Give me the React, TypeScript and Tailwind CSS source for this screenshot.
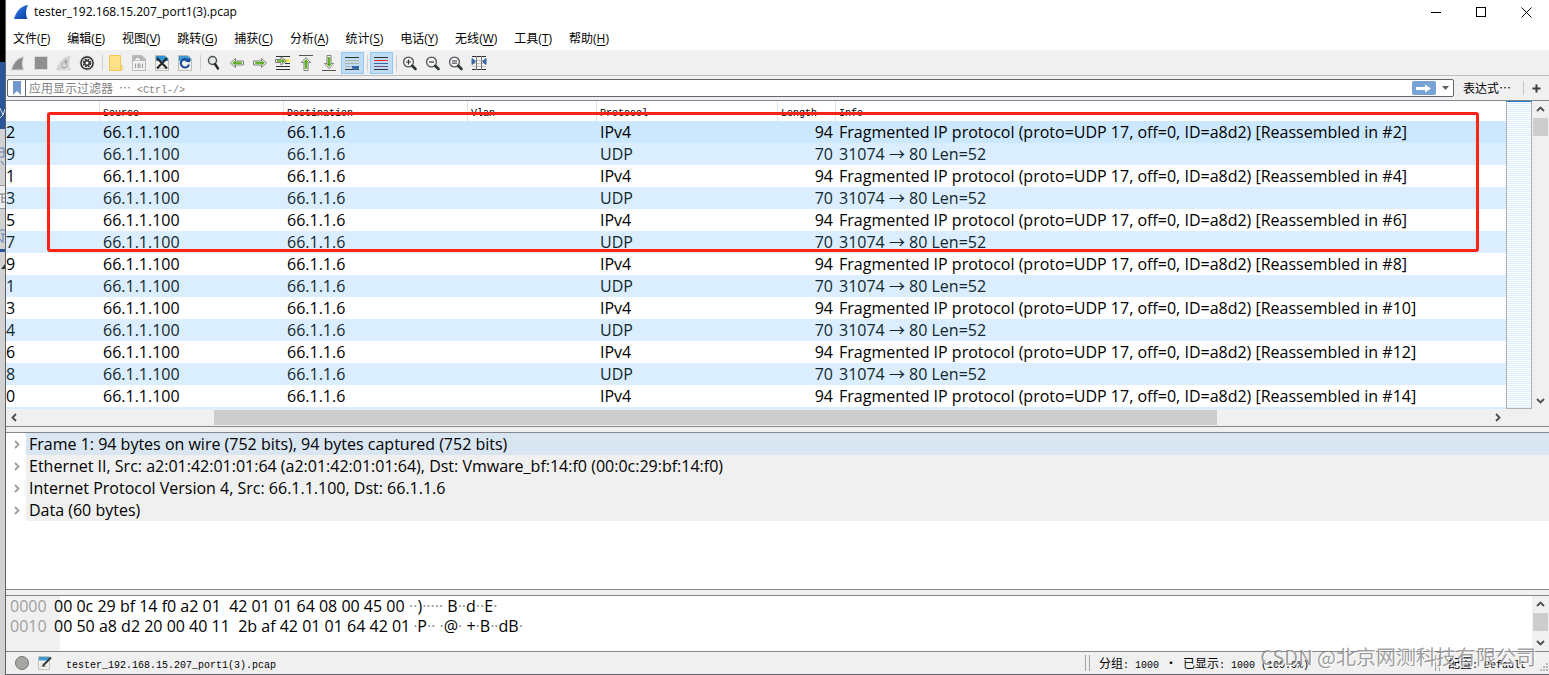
import { useState, type ReactNode } from 'react';

const MENUS = [
  ['文件', 'F'], ['编辑', 'E'], ['视图', 'V'], ['跳转', 'G'], ['捕获', 'C'], ['分析', 'A'],
  ['统计', 'S'], ['电话', 'Y'], ['无线', 'W'], ['工具', 'T'], ['帮助', 'H'],
];

const COLUMNS = ['', 'Source', 'Destination', 'Vlan', 'Protocol', 'Length', 'Info'];

// last visible digit of the No./Time column for every row
const TAILS = ['2', '9', '1', '3', '5', '7', '9', '1', '3', '4', '6', '8', '0'];

const PACKETS = TAILS.map((tail, i) => {
  const fragment = i % 2 === 0;
  return {
    tail,
    src: '66.1.1.100',
    dst: '66.1.1.6',
    vlan: '',
    proto: fragment ? 'IPv4' : 'UDP',
    length: fragment ? 94 : 70,
    info: fragment
      ? `Fragmented IP protocol (proto=UDP 17, off=0, ID=a8d2) [Reassembled in #${i + 2}]`
      : '31074 → 80 Len=52',
  };
});

const DETAILS = [
  'Frame 1: 94 bytes on wire (752 bits), 94 bytes captured (752 bits)',
  'Ethernet II, Src: a2:01:42:01:01:64 (a2:01:42:01:01:64), Dst: Vmware_bf:14:f0 (00:0c:29:bf:14:f0)',
  'Internet Protocol Version 4, Src: 66.1.1.100, Dst: 66.1.1.6',
  'Data (60 bytes)',
];

const HEX = [
  { offset: '0000', bytes: '00 0c 29 bf 14 f0 a2 01  42 01 01 64 08 00 45 00', ascii: '··)····· B··d··E·' },
  { offset: '0010', bytes: '00 50 a8 d2 20 00 40 11  2b af 42 01 01 64 42 01', ascii: ' ·P·· ·@· +·B··dB·' },
];

// Console style text: half-width latin next to full-width chinese
function Mono({ children }: { children: string }) {
  const parts = children.split(/([\u4e00-\u9fff…]+|·)/).filter(Boolean);
  return (
    <span className="inline-flex h-4 items-baseline whitespace-pre font-['Noto_Sans_CJK_SC',sans-serif] text-[12px] leading-4 before:content-['\200b']">
      {parts.map((p, i) =>
        p === '·' ? (
          <span key={i} className="w-3 text-center">{p}</span>
        ) : /[\u4e00-\u9fff…]/.test(p) ? (
          <span key={i}>{p}</span>
        ) : (
          <span key={i} className="font-['Liberation_Mono',monospace] text-[10px]">{p}</span>
        )
      )}
    </span>
  );
}

function Fin({ fill }: { fill: string }) {
  return <path d="M1 15 C3 8 7 2 15 1 C12.500 6 12.500 11 14.500 15 Z" fill={fill} />;
}

function Icon({ children }: { children: ReactNode }) {
  return <svg width="17" height="18" viewBox="0 -1 17 18" fill="none" aria-hidden="true">{children}</svg>;
}

function ToolButton({ label, active, children }: { label: string; active?: boolean; children: ReactNode }) {
  return (
    <button
      aria-label={label}
      title={label}
      className={`flex h-[22px] w-[23px] items-center justify-center border ${
        active ? 'border-[#90c8f6] bg-[#c0dcf3]' : 'border-transparent hover:bg-[#d8eaf9]'
      }`}
    >
      <Icon>{children}</Icon>
    </button>
  );
}

function Separator() {
  return (
    <div className="flex w-[6px] justify-center">
      <div className="h-4 w-px bg-[#cfcfcf]" />
    </div>
  );
}

function Arrow({ turn = 0 }: { turn?: number }) {
  return (
    <g transform={`rotate(${turn} 8 8)`}>
      <path d="M1.500 8 L6.500 3.500 V6 H14.500 V10 H6.500 V12.500 Z" fill="#fff" stroke="#7d7f7a" />
      <path d="M3.600 8 L6 6 V7.200 H12.500 V8.800 H6 V10 Z" fill="#4ea80c" stroke="#4ea80c" strokeWidth=".6" />
    </g>
  );
}

function Lens({ children }: { children?: ReactNode }) {
  return (
    <g transform="translate(0 1)">
      <circle cx="6.500" cy="6" r="4.900" fill="#f4f5f4" stroke="#50545a" strokeWidth="1.300" />
      <path d="M10.200 9.800 L13.500 13" stroke="#2e3436" strokeWidth="2.600" strokeLinecap="round" />
      {children}
    </g>
  );
}

function Page({ band = '#3c9ad0', sheet = '#f6f6ef' }: { band?: string; sheet?: string }) {
  return (
    <>
      <path d="M1.500 .500 H11 L14.500 4 V15.500 H1.500 Z" fill={sheet} stroke="#b9bbb6" />
      <path d="M2 1 H11 L14 4 V6 H2 Z" fill={band} />
    </>
  );
}

function Chevron({ dir, className = 'text-[#505050]' }: { dir: 'up' | 'down' | 'left' | 'right'; className?: string }) {
  const d = { up: 'M1 6 L4.500 2.500 L8 6', down: 'M1 3 L4.500 6.500 L8 3', left: 'M6 1 L2.500 4.500 L6 8', right: 'M3 1 L6.500 4.500 L3 8' }[dir];
  return (
    <svg width="9" height="9" viewBox="0 0 9 9" fill="none" className={className} aria-hidden="true">
      <path d={d} stroke="currentColor" strokeWidth="1.900" />
    </svg>
  );
}

function VScroll() {
  return (
    <div className="flex w-[17px] shrink-0 flex-col items-center bg-[#f0f0f0]">
      <button aria-label="Scroll up" className="flex h-[17px] w-full items-center justify-center"><Chevron dir="up" /></button>
      <div className="h-[18px] w-[15px] bg-[#cdcdcd]" />
      <div className="flex-1" />
      <button aria-label="Scroll down" className="flex h-[17px] w-full items-center justify-center"><Chevron dir="down" /></button>
    </div>
  );
}

// Sliver of the desktop that shows left of the window
function Desktop() {
  return (
    <div className="flex w-[5px] shrink-0 flex-col" aria-hidden="true">
      <div className="h-[62px] bg-black" />
      <div className="h-[67px] bg-[#2a5699]">
        <svg width="5" height="67" fill="none"><path d="M0 46 L3 53 L5 47 M3 53 L0 56" stroke="#d5deec" /></svg>
      </div>
      <div className="flex-1 bg-[#d2d2d2]">
        <svg width="5" height="150" fill="none">
          <path d="M0 19 H4 V28 H0 M0 23 H4 M1 32 L4 36" stroke="#5a7db5" />
          <rect y="57" width="5" height="22" fill="#ededed" />
          <path d="M0 56.500 H5 M0 79.500 H5" stroke="#9a9a9a" />
          <path d="M0 65 H5 M2 65 V74 M2 69 H5 M2 73 H5" stroke="#777" />
          <path d="M0 101 H5 M1 105 H5 M3 105 V114 M0 110 L2 113" stroke="#5a7db5" />
          <rect y="120" width="5" height="3" fill="#2a5699" />
          <path d="M1 140 L5 135 V140 Z" fill="#333" />
        </svg>
      </div>
    </div>
  );
}

export default function App() {
  const [filter, setFilter] = useState('');
  const [selected, setSelected] = useState(0);

  return (
    <div className="flex h-screen min-h-[640px] w-full overflow-hidden bg-[#f0f0f0] font-['Open_Sans','Noto_Sans_CJK_SC',sans-serif] text-black">
      <Desktop />
      <div className="relative flex min-w-0 flex-1 flex-col border-b border-l border-[#5f6166]">

        {/* title bar */}
        <header className="flex h-6 items-center justify-between bg-white">
          <div className="flex items-center gap-[5px] pl-[7px]">
            <svg width="16" height="16" viewBox="0 0 16 16" aria-hidden="true">
              <defs>
                <linearGradient id="fin" x1="0" y1="0" x2="1" y2="1">
                  <stop offset="0" stopColor="#5a9be8" />
                  <stop offset=".5" stopColor="#1c5fc8" />
                  <stop offset="1" stopColor="#0b3f9d" />
                </linearGradient>
              </defs>
              <Fin fill="url(#fin)" />
            </svg>
            <h1 className="text-[12px] leading-4">tester_192.168.15.207_port1(3).pcap</h1>
          </div>
          <div className="flex">
            <button aria-label="Minimize" className="flex h-6 w-[45px] items-center justify-center">
              <svg width="11" height="11"><path d="M0 5.500 H10" stroke="#000" /></svg>
            </button>
            <button aria-label="Maximize" className="flex h-6 w-[45px] items-center justify-center">
              <svg width="11" height="11" fill="none"><rect x=".5" y=".5" width="9" height="9" stroke="#000" /></svg>
            </button>
            <button aria-label="Close" className="flex h-6 w-[45px] items-center justify-center">
              <svg width="11" height="11"><path d="M.5 .5 L10.500 10.500 M10.500 .5 L.5 10.500" stroke="#000" /></svg>
            </button>
          </div>
        </header>

        {/* menus */}
        <nav className="flex h-[27px] items-end gap-[17px] border-b border-[#f0f0f0] bg-white pb-[3px] pl-[7px] text-[12px] leading-4">
          {MENUS.map(([name, key]) => (
            <button key={key} className="whitespace-nowrap">
              {name}(<span className="underline underline-offset-2">{key}</span>)
            </button>
          ))}
        </nav>

        {/* toolbar */}
        <div className="flex h-[25px] items-center border-b border-[#bdbdbd] pl-px">
          <ToolButton label="Start capture">
            <path d="M0 15.500 C2 8 6 2 15 .500 C12.500 6 13 11 15 15.500 Z" fill="#dcdcdc" />
            <path d="M2 14.500 C4 8 7 4 13 2.500 C11.500 7 11.500 11 13 14.500 Z" fill="#8b8b8b" />
          </ToolButton>
          <ToolButton label="Stop capture">
            <rect x="1" y="1" width="14" height="14" fill="#d8d8d8" />
            <rect x="2" y="2" width="12" height="12" fill="#8f8f8f" />
          </ToolButton>
          <ToolButton label="Restart capture">
            <path d="M.5 15 C2.500 8 6 2.500 14.500 1 C12.500 6 12.500 11 14.500 15 Z" fill="#cfcfcf" stroke="#dedede" />
            <path d="M7 7.500 C4.500 10 6 13 8.500 13 C11.500 13 12 9.500 10.200 8" stroke="#fff" strokeWidth="2.600" />
            <path d="M7 7.500 C4.500 10 6 13 8.500 13 C11.500 13 12 9.500 10.200 8" stroke="#9a9a9a" strokeWidth="1.300" />
            <path d="M9 4.500 L12 7 L8.500 8.500 Z" fill="#9a9a9a" />
          </ToolButton>
          <ToolButton label="Capture options">
            <circle cx="8" cy="8" r="7.500" fill="#c8c8c8" />
            <circle cx="8" cy="8" r="6" fill="#fff" stroke="#2c2c2c" strokeWidth="1.400" />
            <circle cx="8" cy="8" r="3.600" stroke="#333" strokeWidth="1.600" strokeDasharray="2 .830" />
            <circle cx="8" cy="8" r="3" fill="#333" />
            <circle cx="8" cy="8" r="1.500" fill="#fff" />
          </ToolButton>
          <Separator />
          <ToolButton label="Open">
            <path d="M1.500 .500 H12.500 V10.500 H14 V15.500 H1.500 Z" fill="#fde087" stroke="#ecc75e" />
            <path d="M12 11 H14 V15.500 H12 Z" fill="#f5cf62" />
          </ToolButton>
          <ToolButton label="Save">
            <Page band="#b5b5b5" sheet="#f1f1f1" />
            <path d="M5 5.500 C5 3 8 3.500 8 5.500" stroke="#fff" strokeWidth="1.500" />
            <path d="M4.500 8.500 V13 M7 9 h2 v3.500 h-2 z M11.500 8.500 V13" stroke="#9a9a9a" />
          </ToolButton>
          <ToolButton label="Close file">
            <Page band="#2d92cf" />
            <path d="M3 13.500 H13" stroke="#c9cbc4" />
            <path d="M3 3 L13 13.500 M13 3 L3 13.500" stroke="#22282d" strokeWidth="2.200" />
          </ToolButton>
          <ToolButton label="Reload file">
            <Page band="#3c9ad0" />
            <path d="M11.500 6 A4.200 4.200 0 1 0 12 9.500" stroke="#1e4f9c" strokeWidth="2.200" />
            <path d="M8 6.500 L13 7.500 L13 2.500 Z" fill="#1e4f9c" />
          </ToolButton>
          <Separator />
          <ToolButton label="Find packet">
            <circle cx="6.500" cy="5.500" r="4" fill="#e7eae8" stroke="#4f5457" strokeWidth="1.500" />
            <path d="M9 9 L12 13.500" stroke="#23282a" strokeWidth="2.400" strokeLinecap="round" />
          </ToolButton>
          <ToolButton label="Previous packet"><Arrow /></ToolButton>
          <ToolButton label="Next packet"><Arrow turn={180} /></ToolButton>
          <ToolButton label="Go to packet">
            <path d="M1 1.500 H15 M1 11.500 H15 M1 14.500 H15" stroke="#2e3436" />
            <path d="M10 8.500 H15" stroke="#2e3436" />
            <rect x="10" y="4" width="5" height="3" fill="#fce94f" />
            <path d="M.5 4.500 H6 V2 L11.500 6 L6 10 V7.500 H.5 Z" fill="#fff" stroke="#7d7f7a" />
            <path d="M2 6 H8.500 M7 4.500 L9 6 L7 7.500" stroke="#4ea80c" strokeWidth="1.300" />
          </ToolButton>
          <ToolButton label="First packet">
            <path d="M1 .500 H15" stroke="#555" />
            <g transform="translate(0 1)"><Arrow turn={90} /></g>
          </ToolButton>
          <ToolButton label="Last packet">
            <path d="M1 15.500 H15" stroke="#555" />
            <g transform="translate(0 -1)"><Arrow turn={-90} /></g>
          </ToolButton>
          <ToolButton label="Auto scroll" active>
            <path d="M1 2.500 H15 M1 14.500 H15" stroke="#2e3436" />
            <path d="M1 5.500 H15 M1 8.500 H15 M1 11.500 H8" stroke="#b0b3ad" />
            <path d="M8 11 H15 V13 L13 15 H10 L8 13 Z" fill="#3465a4" />
          </ToolButton>
          <Separator />
          <ToolButton label="Colorize" active>
            <path d="M1 2.500 H15 M1 14.500 H15" stroke="#2e3436" />
            <path d="M1 5.500 H15" stroke="#ef2929" />
            <path d="M1 8.500 H15" stroke="#3465a4" />
            <path d="M1 11.500 H15" stroke="#75507b" />
          </ToolButton>
          <Separator />
          <ToolButton label="Zoom in"><Lens><path d="M4 6 H9 M6.500 3.500 V8.500" stroke="#2e3436" strokeWidth="1.200" /></Lens></ToolButton>
          <ToolButton label="Zoom out"><Lens><path d="M4 6 H9" stroke="#2e3436" strokeWidth="1.200" /></Lens></ToolButton>
          <ToolButton label="Normal size"><Lens><path d="M4 5 H9 M4 7.200 H9" stroke="#2e3436" /></Lens></ToolButton>
          <ToolButton label="Resize columns">
            <path d="M1 1.500 H15 M1 14.500 H15" stroke="#2e3436" />
            <path d="M1 5.500 H15 M1 8.500 H15 M1 11.500 H15" stroke="#c4c6c2" />
            <path d="M5.500 1 V15 M10.500 1 V15" stroke="#777" />
            <path d="M1 3.500 L4.500 6.500 L1 9.500 Z M15 3.500 L11.500 6.500 L15 9.500 Z" fill="#3465a4" stroke="#3465a4" />
          </ToolButton>
        </div>

        {/* display filter */}
        <div className="flex h-6 items-center pl-px">
          <div className="flex h-[18px] flex-1 items-stretch rounded-[2px] border border-[#62656b] bg-white">
            <button aria-label="Bookmarks" className="flex w-[18px] items-center justify-center border-r border-[#62656b]">
              <svg width="8" height="14" viewBox="0 0 8 14"><path d="M0 0 H8 V14 L4 10 L0 14 Z" fill="#7298cc" /></svg>
            </button>
            <div className="relative flex-1">
              <input
                id="filter"
                value={filter}
                onChange={(e) => setFilter(e.target.value)}
                className="block h-full w-full bg-transparent px-[3px] text-[12px] outline-none"
              />
              {!filter && (
                <label htmlFor="filter" className="pointer-events-none absolute inset-y-0 left-[3px] flex items-center text-[#7f7f7f]">
                  <Mono>应用显示过滤器 … &lt;Ctrl-/&gt;</Mono>
                </label>
              )}
            </div>
            <button aria-label="Apply filter" className="my-px flex w-6 items-center justify-center rounded-[2px] bg-[#78a3d4]">
              <svg width="17" height="9" viewBox="0 0 17 9"><path d="M1 3 H10 V.500 L16 4.500 L10 8.500 V6 H1 Z" fill="#fff" /></svg>
            </button>
            <button aria-label="Recent filters" className="flex w-[17px] items-center justify-center pl-[3px]">
              <svg width="7" height="4"><path d="M0 0 H7 L3.500 4 Z" fill="#5f5f5f" /></svg>
            </button>
          </div>
          <button className="ml-[9px] flex"><Mono>表达式…</Mono></button>
          <div className="ml-3 h-[14px] w-px bg-[#c8c8c8]" />
          <button aria-label="Add filter button" className="flex w-[25px] items-center justify-center">
            <svg width="9" height="9"><path d="M4.500 .500 V8.500 M.5 4.500 H8.500" stroke="#3c3c3c" strokeWidth="2" /></svg>
          </button>
        </div>

        {/* packet list */}
        <section className="relative border-y border-[#828790] bg-white">
          <div className="flex h-[308px]">
            <div className="flex min-w-0 flex-1 flex-col overflow-hidden">
              <table className="w-full table-fixed border-collapse text-left">
                <colgroup>
                  <col className="w-[93px]" />
                  <col className="w-[184px]" />
                  <col className="w-[184px]" />
                  <col className="w-[129px]" />
                  <col className="w-[181px]" />
                  <col className="w-[58px]" />
                  <col />
                </colgroup>
                <thead>
                  <tr className="h-5">
                    {COLUMNS.map((c, i) => (
                      <th key={i} className={`p-0 font-normal ${i > 0 ? 'pl-1 shadow-[inset_1px_0_0_#e2e2e2]' : ''}`}>
                        <div className="flex h-5 items-center"><Mono>{c}</Mono></div>
                      </th>
                    ))}
                  </tr>
                </thead>
                <tbody className="text-[16px] leading-[22px] whitespace-nowrap">
                  {PACKETS.map((p, i) => (
                    <tr
                      key={i}
                      onClick={() => setSelected(i)}
                      className={`h-[22px] ${i === selected ? 'bg-[#cce8ff]' : i % 2 ? 'bg-[#daeeff] text-[#12272e]' : 'bg-white'}`}
                    >
                      <td className="p-0">{p.tail}</td>
                      <td className="p-0 pl-1">{p.src}</td>
                      <td className="p-0 pl-1">{p.dst}</td>
                      <td className="p-0 pl-1">{p.vlan}</td>
                      <td className="p-0 pl-1">{p.proto}</td>
                      <td className="p-0 pr-[2px] text-right">{p.length}</td>
                      <td className="p-0 pl-1">{p.info}</td>
                    </tr>
                  ))}
                </tbody>
              </table>
              <div className="flex-1 bg-[#daeeff]" />
            </div>
            <div className="w-[26px] border border-t-[#1979ca] border-[#b0b0b0] bg-[repeating-linear-gradient(to_bottom,#fff_0px,#fff_1px,#daeeff_1px,#daeeff_2px)]" />
            <VScroll />
          </div>
          <div className="flex h-[17px] items-center bg-[#f0f0f0]">
            <button aria-label="Scroll left" className="flex w-[17px] justify-center"><Chevron dir="left" /></button>
            <div className="flex h-[15px] flex-1">
              <div className="flex-[191]" />
              <div className="flex-[1003] bg-[#cdcdcd]" />
              <div className="flex-[272]" />
            </div>
            <button aria-label="Scroll right" className="mr-[43px] flex w-[17px] justify-center"><Chevron dir="right" /></button>
          </div>

          {/* hand drawn marker over the first six packets */}
          <div className="pointer-events-none absolute top-[11px] right-[70px] left-[41px] h-[140px] rounded-[3px] border-[3px] border-[#fb2316]" />
        </section>

        <div className="h-[5px]" />

        {/* packet details */}
        <section className="min-h-0 flex-1 overflow-hidden border-y border-[#828790] bg-white text-[16px] leading-[22px]">
          {DETAILS.map((d, i) => (
            <div key={i} className="flex h-[22px] items-center">
              <button aria-label="Expand" className="flex w-5 shrink-0 justify-center"><Chevron dir="right" className="text-[#a0a0a0]" /></button>
              <div className={`flex-1 pl-[3px] whitespace-nowrap ${i === 0 ? 'bg-[#d9e6f1]' : 'bg-[#f0f0f0]'}`}>{d}</div>
            </div>
          ))}
        </section>

        <div className="h-[5px]" />

        {/* packet bytes */}
        <section className="flex h-[57px] border-y border-[#828790] bg-[linear-gradient(to_right,#f0f0f0_54px,#fff_54px)] text-[16px] leading-5">
          <div className="flex-1 whitespace-pre">
            {HEX.map((h) => (
              <div key={h.offset} className="flex h-5">
                <span className="w-12 shrink-0 pl-1 text-[#a0a0a0]">{h.offset}</span>
                <span className="w-[355px] shrink-0">{h.bytes}</span>
                <span>
                  {h.ascii.split(/(·+)/).map((s, i) => (
                    <span key={i} className={s.startsWith('·') ? 'text-[#909090]' : ''}>{s}</span>
                  ))}
                </span>
              </div>
            ))}
          </div>
          <VScroll />
        </section>

        {/* status bar */}
        <footer className="flex h-[22px] items-center">
          <button aria-label="Expert information" className="ml-[9px]">
            <svg width="14" height="14"><circle cx="7" cy="7" r="6.500" fill="#a4a6a1" stroke="#757772" /></svg>
          </button>
          <button aria-label="Capture comment" className="ml-[9px]">
            <svg width="14" height="14" viewBox="0 0 14 14" fill="none">
              <path d="M.5 .500 H11.500 V13.500 H.5 Z" fill="#f3f3ee" stroke="#c3c3bd" />
              <path d="M1 1 H11 V4.500 H1 Z" fill="#3c9ad0" />
              <path d="M2.500 8 H8 M2.500 10.500 H9" stroke="#bbb" />
              <path d="M13 1.500 L6 8.500 L5 10.500" stroke="#2e3436" strokeWidth="2" />
            </svg>
          </button>
          <div className="ml-[14px] flex flex-1"><Mono>tester_192.168.15.207_port1(3).pcap</Mono></div>
          <div className="h-4 w-[5px] border-x border-[#a5a5a5]" />
          <div className="ml-[9px] flex w-[336px]"><Mono>分组: 1000 · 已显示: 1000 (100.0%)</Mono></div>
          <div className="h-4 w-[5px] border-x border-[#a5a5a5]" />
          <div className="ml-2 flex w-[92px]"><Mono>配置: Default</Mono></div>
          <svg width="9" height="9" className="mt-2" fill="#b8b8b8">
            <path d="M6 0h2v2h-2z M3 3h2v2h-2z M6 3h2v2h-2z M0 6h2v2h-2z M3 6h2v2h-2z M6 6h2v2h-2z" />
          </svg>
        </footer>

        <div className="pointer-events-none absolute right-[13px] bottom-[5px] font-['Noto_Sans_CJK_SC',sans-serif] text-[20px] leading-6 text-[#777]/70 [text-shadow:1px_1px_0_#fff]">
          CSDN @北京网测科技有限公司
        </div>
      </div>
    </div>
  );
}
